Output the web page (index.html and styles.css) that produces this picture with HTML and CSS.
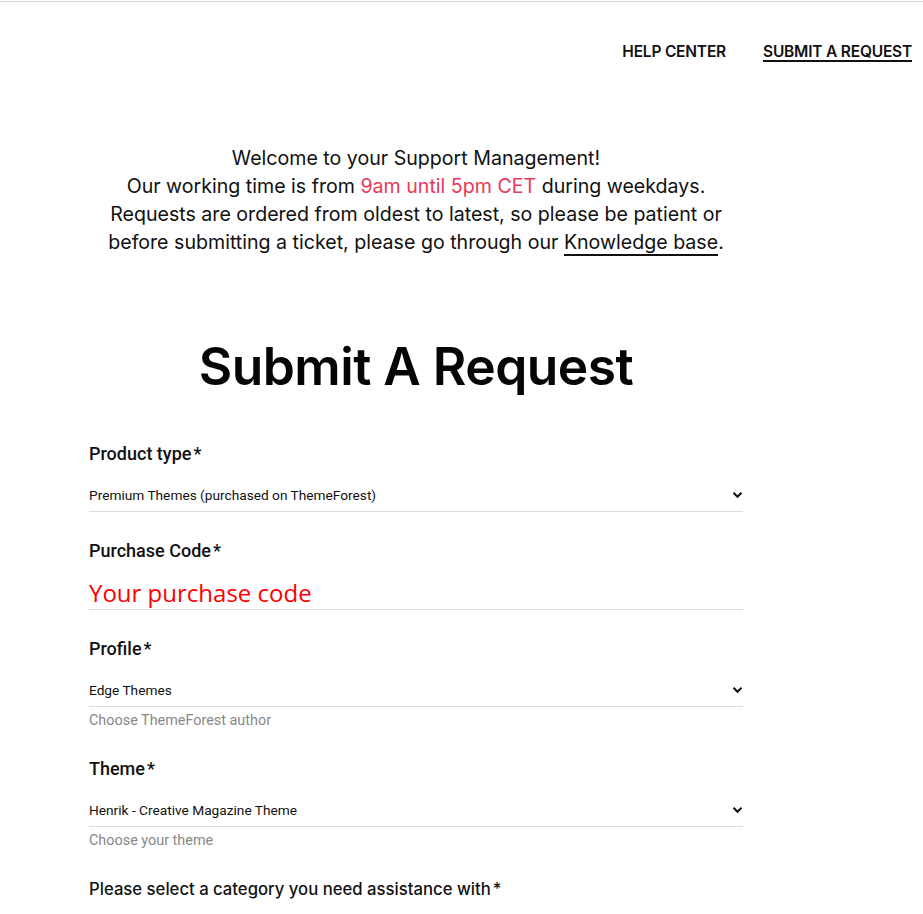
FILE: index.html
```html
<!DOCTYPE html>
<html>
<head>
<meta charset="utf-8">
<link rel="stylesheet" href="styles.css">
</head>
<body>
<div class="topline"></div>
<header class="nav">
  <a class="nav-link" href="#">HELP CENTER</a>
  <a class="nav-link active" href="#">SUBMIT A REQUEST</a>
</header>
<main class="content">
  <p class="welcome">
    Welcome to your Support Management!<br>
    Our working time is from <span class="hl">9am until 5pm CET</span> during weekdays.<br>
    Requests are ordered from oldest to latest, so please be patient or<br>
    before submitting a ticket, please go through our <a class="kb" href="#">Knowledge base</a>.
  </p>
  <h1 class="title">Submit A Request</h1>
  <form class="form">
    <div class="field">
      <label class="label">Product type<span class="req">*</span></label>
      <div class="select"><span>Premium Themes (purchased on ThemeForest)</span><svg class="chev" width="11" height="8" viewBox="0 0 11 8"><path d="M1.5 1.8 L5.5 5.8 L9.5 1.8" fill="none" stroke="#111" stroke-width="2"/></svg></div>
    </div>
    <div class="field">
      <label class="label">Purchase Code<span class="req">*</span></label>
      <div class="input"><span class="ph">Your purchase code</span></div>
    </div>
    <div class="field field-hint">
      <label class="label">Profile<span class="req">*</span></label>
      <div class="select"><span>Edge Themes</span><svg class="chev" width="11" height="8" viewBox="0 0 11 8"><path d="M1.5 1.8 L5.5 5.8 L9.5 1.8" fill="none" stroke="#111" stroke-width="2"/></svg></div>
      <p class="hint">Choose ThemeForest author</p>
    </div>
    <div class="field field-hint">
      <label class="label">Theme<span class="req">*</span></label>
      <div class="select"><span>Henrik - Creative Magazine Theme</span><svg class="chev" width="11" height="8" viewBox="0 0 11 8"><path d="M1.5 1.8 L5.5 5.8 L9.5 1.8" fill="none" stroke="#111" stroke-width="2"/></svg></div>
      <p class="hint">Choose your theme</p>
    </div>
    <div class="field">
      <label class="label label-alt">Please select a category you need assistance with<span class="req">*</span></label>
    </div>
  </form>
</main>
</body>
</html>
```
FILE: styles.css
```css
html, body { margin: 0; padding: 0; background: #fff; }
body { font-family: Inter, "Noto Sans", sans-serif; color: #111; overflow: hidden; height: 914px; }
.topline { height: 1px; background: #d6d6d6; margin-top: 1px; }
.nav { display: flex; justify-content: flex-end; align-items: flex-start; gap: 37px; padding: 42px 11px 0 0; height: 38px; }
.nav-link { font-family: Inter, sans-serif; font-weight: 600; font-size: 15.5px; color: #111; text-decoration: none; letter-spacing: -0.2px; line-height: 16px; }
.nav-link.active { border-bottom: 2px solid #111; }
.content { width: 654px; margin-left: 89px; }
.welcome { margin: 62px 0 0; text-align: center; font-size: 19.6px; line-height: 28px; color: #111; }
.hl { color: #e8385a; }
.kb { color: #111; text-decoration: none; border-bottom: 2px solid #111; }
.title { margin: 70px 0 0; text-align: center; font-size: 51.5px; font-weight: 600; line-height: 80px; letter-spacing: -0.5px; color: #050505; }
.form { margin-top: 37px; display: flex; flex-direction: column; }
.field { display: flex; flex-direction: column; margin-bottom: 28px; }
.field-hint { margin-bottom: 29px; }
.label { font-family: Roboto, sans-serif; font-weight: 500; font-size: 18px; line-height: 22px; color: #111; }
.req { margin-left: 2px; }
.label-alt { font-family: Inter, sans-serif; font-weight: 500; font-size: 16.7px; }
.select { display: flex; justify-content: space-between; align-items: center; margin-top: 14px; height: 32px; border-bottom: 1px solid #ddd; font-family: Roboto, sans-serif; font-size: 13.7px; color: #111; }
.select span { line-height: 18px; }
.input { margin-top: 15px; height: 32px; border-bottom: 1px solid #ddd; display: flex; align-items: center; }
.ph { font-family: "Open Sans", sans-serif; font-size: 24px; color: #f00; line-height: 32px; }
.hint { margin: 6px 0 0; font-family: Roboto, sans-serif; font-size: 14.4px; color: #888; line-height: 16px; }
```
